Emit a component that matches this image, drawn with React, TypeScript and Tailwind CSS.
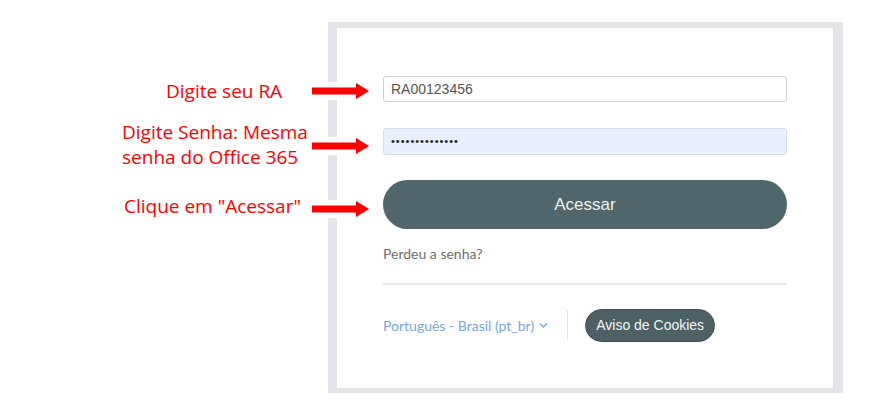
import React from "react";

const labelFont = { fontFamily: '"Open Sans", "Noto Sans", sans-serif' };

function Arrow() {
  return (
    <svg width="58" height="18" viewBox="0 0 58 18" className="shrink-0 bg-white">
      <rect x="0" y="5.5" width="46" height="7" fill="#ff0000" />
      <polygon points="44,1 57,9 44,17" fill="#ff0000" />
    </svg>
  );
}

function Chevron() {
  return (
    <svg width="11" height="7" viewBox="0 0 11 7" className="ml-[4px]">
      <path d="M2 1.5 L5.5 5 L9 1.5" fill="none" stroke="#7aa7dc" strokeWidth="1.4" />
    </svg>
  );
}

export default function App() {
  return (
    <div className="flex h-[405px] w-[886px] bg-white pt-[22px]">
      {/* annotation column, arrows overlap the card frame */}
      <div
        className="relative z-10 mr-[-42px] w-[370px] shrink-0 text-[19px] text-[#ff0000]"
        style={labelFont}
      >
        <div className="mt-[60px] flex h-[18px] items-center">
          <span className="ml-[166px] leading-none">Digite seu RA</span>
          <span className="ml-auto">
            <Arrow />
          </span>
        </div>
        <div className="mt-[20px] flex items-start">
          <span className="ml-[122px] leading-[25px]">
            Digite Senha: Mesma
            <br />
            senha do Office 365
          </span>
          <span className="ml-auto mt-[17px]">
            <Arrow />
          </span>
        </div>
        <div className="mt-[30px] flex h-[18px] items-center">
          <span className="ml-[124px] mt-[-6px] leading-none">Clique em "Acessar"</span>
          <span className="ml-auto">
            <Arrow />
          </span>
        </div>
      </div>

      {/* login card */}
      <div className="h-[371px] w-[515px] shrink-0 bg-[#e3e5e8] pb-[5px] pl-[9px] pr-[10px] pt-[6px]">
        <div className="flex h-full flex-col bg-white px-[46px] pt-[48px]">
          <div
            className="flex h-[26px] items-center rounded-[3px] border border-[#cfd3d6] px-[7px] text-[14px] text-[#555]"
            style={{ fontFamily: '"Liberation Sans", Arial, sans-serif' }}
          >
            RA00123456
          </div>
          <div
            className="mt-[26px] flex h-[27px] items-center rounded-[3px] border border-[#d6dde6] bg-[#e8f0fe] px-[7px] text-[11px] tracking-[1px] text-[#222]"
            style={{ fontFamily: '"Liberation Sans", Arial, sans-serif' }}
          >
            ••••••••••••••
          </div>
          <div
            className="mt-[25px] flex h-[49px] items-center justify-center rounded-full bg-[#51666a] text-[17px] text-[#eef2f3]"
            style={{ fontFamily: '"Liberation Sans", Arial, sans-serif' }}
          >
            Acessar
          </div>
          <div
            className="mt-[17px] text-[14px] leading-[16px] text-[#6e6e6e]"
            style={{ fontFamily: "Lato, sans-serif" }}
          >
            Perdeu a senha?
          </div>
          <div className="mt-[21px] h-[2px] bg-[#eaeaea]" />
          <div className="mt-[23px] flex h-[34px] items-center">
            <span
              className="text-[14px] text-[#7aa7dc]"
              style={{ fontFamily: "Lato, sans-serif" }}
            >
              Português - Brasil (pt_br)
            </span>
            <Chevron />
            <div className="ml-[18px] h-[30px] w-px bg-[#e6e6e6]" />
            <div
              className="ml-[17px] flex h-[33px] w-[130px] items-center justify-center rounded-full border border-[#3f5054] bg-[#4d6165] text-[14px] text-[#f2f5f5]"
              style={{ fontFamily: '"Liberation Sans", Arial, sans-serif' }}
            >
              Aviso de Cookies
            </div>
          </div>
        </div>
      </div>
    </div>
  );
}
